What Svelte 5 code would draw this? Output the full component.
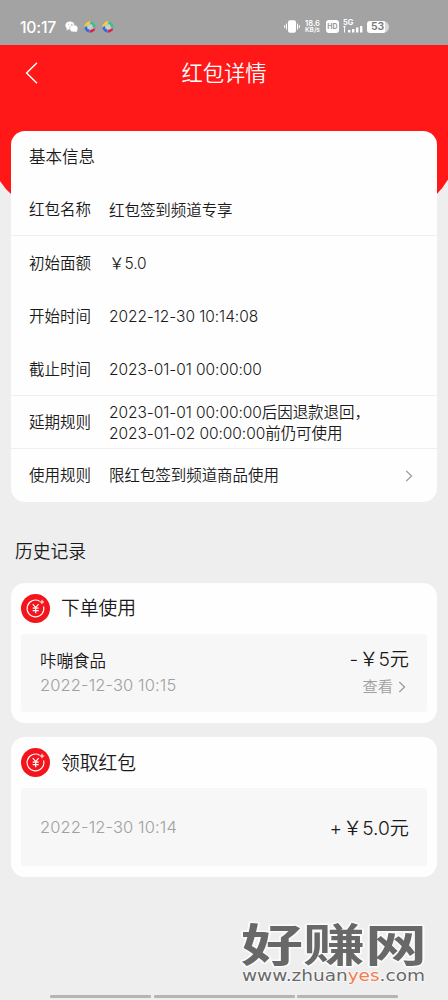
<script lang="ts">
  type InfoRow = { label: string; value: string[]; divider?: boolean; link?: boolean };

  const rows: InfoRow[] = [
    { label: "红包名称", value: ["红包签到频道专享"], divider: true },
    { label: "初始面额", value: ["￥5.0"] },
    { label: "开始时间", value: ["2022-12-30 10:14:08"] },
    { label: "截止时间", value: ["2023-01-01 00:00:00"], divider: true },
    {
      label: "延期规则",
      value: ["2023-01-01 00:00:00后因退款退回，", "2023-01-02 00:00:00前仍可使用"],
      divider: true,
    },
    { label: "使用规则", value: ["限红包签到频道商品使用"], link: true },
  ];

  const records = [
    { title: "下单使用", shop: "咔嘣食品", time: "2022-12-30 10:15", sign: "-", amount: "￥5元", detail: true },
    { title: "领取红包", shop: "", time: "2022-12-30 10:14", sign: "+", amount: "￥5.0元", detail: false },
  ];
</script>

{#snippet pinwheel()}
  <svg class="pinwheel" viewBox="0 0 12 12">
    <path d="M.4 6.4A5.6 5.6 0 0 1 6.6 .4L5.6 3.2L3.4 4.2Z" fill="#f6cf2f" />
    <path d="M7 .5A5.6 5.6 0 0 1 11.5 7L8.8 5.8L7.8 3.4L5.9 3.2Z" fill="#35c48d" />
    <path d="M11.4 7.4A5.6 5.6 0 0 1 5 11.5L6.4 8.8L8.7 8Z" fill="#e0204e" />
    <path d="M4.6 11.4A5.6 5.6 0 0 1 .5 6.6L3.2 5L3.6 7.6L5.8 8.8Z" fill="#2f6de0" />
    <path d="M3.4 4.2L5.8 3.2L8 3.5L8.8 5.9L8.6 8L6.2 8.8L3.7 7.8L3.1 5.4Z" fill="#c9cfcc" />
  </svg>
{/snippet}

{#snippet chevron()}
  <svg class="chevron" viewBox="0 0 8 12" fill="none">
    <path d="M1.3 1L6.6 6L1.3 11" stroke="#999" stroke-width="1.2" />
  </svg>
{/snippet}

<div class="page">
  <div class="status-bar">
    <span class="clock">10:17</span>
    <svg class="wechat" viewBox="0 0 13 12">
      <ellipse cx="5" cy="4.4" rx="4.6" ry="4" fill="#fff" />
      <path d="M1.8 7L1.4 9.4L4 8Z" fill="#fff" />
      <ellipse cx="8.8" cy="7.4" rx="4.1" ry="3.5" fill="#fff" stroke="#a3a3a3" stroke-width=".5" />
      <path d="M9.5 10L11.8 11.3L11.4 9.2Z" fill="#fff" />
      <circle cx="3.5" cy="3.3" r=".5" fill="#a3a3a3" />
      <circle cx="6.5" cy="3.3" r=".5" fill="#a3a3a3" />
    </svg>
    {@render pinwheel()}
    {@render pinwheel()}

    <div class="status-right">
      <svg class="vibrate" viewBox="0 0 16 13">
        <rect x="4" y=".3" width="8" height="12.4" rx="2" fill="#fff" />
        <path d="M2.5 3.5V9.5M13.5 3.5V9.5M.7 5V8M15.3 5V8" stroke="#fff" stroke-width="1" />
      </svg>
      <div class="speed"><span>18.6</span><span>KB/s</span></div>
      <span class="hd">HD</span>
      <div class="signal">
        <span>5G</span>
        <svg viewBox="0 0 20 7" fill="#fff">
          <path d="M0 0H3L1.5 2.5ZM1 2H2V6.5H1Z" />
          <rect x="5" y="4" width="2.4" height="2.5" />
          <rect x="9" y="3" width="2.4" height="3.5" />
          <rect x="13" y="1.5" width="2.4" height="5" />
          <rect x="17" y="0" width="2.4" height="6.5" />
        </svg>
      </div>
      <div class="battery"><span>53</span></div>
    </div>
  </div>

  <header class="hero">
    <div class="nav">
      <svg class="back" viewBox="0 0 13 22" fill="none">
        <path d="M12 .8L1.6 11L12 21.2" stroke="#fff" stroke-width="1.5" />
      </svg>
      <h1>红包详情</h1>
    </div>
  </header>

  <section class="card info">
    <h2>基本信息</h2>
    {#each rows as row}
      <div class="row" class:divider={row.divider}>
        <span class="label">{row.label}</span>
        <div class="value">
          {#each row.value as line}
            <span>{line}</span>
          {/each}
        </div>
        {#if row.link}{@render chevron()}{/if}
      </div>
    {/each}
  </section>

  <h3>历史记录</h3>

  {#each records as record}
    <section class="card record">
      <div class="record-head">
        <svg class="coin" viewBox="0 0 29 29" fill="none">
          <circle cx="14.5" cy="14.5" r="14.5" fill="#f4141c" />
          <path d="M18.6 7.2A8.4 8.4 0 1 0 22.6 12.4" stroke="#fff" stroke-width="1.1" />
          <path d="M21 5.8V10.2M18.8 8H23.2" stroke="#fff" stroke-width="1" />
          <path d="M11.8 10.2L14.7 13.6L17.6 10.2M14.7 13.6V19.2M11.7 14.2H17.7M11.7 16.6H17.7" stroke="#fff" stroke-width="1.2" />
        </svg>
        <span>{record.title}</span>
      </div>
      <div class="panel">
        <div class="left">
          {#if record.shop}<span class="shop">{record.shop}</span>{/if}
          <span class="time">{record.time}</span>
        </div>
        <div class="right">
          <span class="amount"><i>{record.sign}</i>{record.amount}</span>
          {#if record.detail}
            <span class="detail">查看{@render chevron()}</span>
          {/if}
        </div>
      </div>
    </section>
  {/each}

  <svg class="watermark" viewBox="0 0 192 70">
    <text class="brand" x="3" y="45" textLength="186" lengthAdjust="spacingAndGlyphs">好赚网</text>
    <text class="site" x="4" y="64" textLength="183" lengthAdjust="spacingAndGlyphs">www.zhuan<tspan fill="#f47a50">yes</tspan>.com</text>
  </svg>

  <div class="home-bar"><i></i><i></i><i></i></div>
</div>

<style>
  :global(body) {
    background: #eee;
  }

  .page {
    position: relative;
    box-sizing: border-box;
    width: 448px;
    height: 1000px;
    overflow: hidden;
    background: #eee;
    color: #1a1a1a;
    font-family: Inter, "Noto Sans CJK SC", sans-serif;
    font-weight: 350;
  }

  svg {
    display: block;
    flex: none;
  }

  h1, h2, h3 {
    margin: 0;
    font-weight: inherit;
  }

  .status-bar {
    box-sizing: border-box;
    height: 45px;
    padding: 8px 59px 0 20px;
    display: flex;
    align-items: center;
    background: #a3a3a3;
    color: #fff;
  }

  .clock {
    width: 45px;
    padding-top: 1px;
    font-size: 15.8px;
    font-weight: 500;
    letter-spacing: -0.2px;
  }

  .wechat {
    width: 13px;
    height: 12px;
  }

  .pinwheel {
    width: 12px;
    height: 12px;
    margin-left: 6px;
  }

  .status-right {
    display: flex;
    align-items: center;
    margin-left: auto;
  }

  .vibrate {
    width: 16px;
    height: 13px;
    margin-right: 4px;
  }

  .speed {
    display: flex;
    flex-direction: column;
    align-items: center;
    width: 17px;
    margin-right: 5px;
    font-size: 7.5px;
    font-weight: 600;
    line-height: 7px;
  }

  .speed span:last-child {
    font-size: 6.5px;
    line-height: 6px;
  }

  .hd {
    width: 13px;
    margin-right: 4px;
    border-radius: 3px;
    background: #fff;
    color: #999;
    font-size: 7px;
    font-weight: 700;
    line-height: 13px;
    text-align: center;
  }

  .signal {
    width: 20px;
    margin-right: 4px;
    font-size: 7.5px;
    font-weight: 700;
    line-height: 6px;
  }

  .signal span {
    display: block;
  }

  .signal svg {
    width: 20px;
    height: 7px;
  }

  .battery {
    display: flex;
    align-items: center;
    width: 22px;
    border-radius: 3px 6px 6px 3px;
    background: linear-gradient(90deg, #fff 80%, #d8d8d8 80%);
    color: #777;
    font-size: 10.5px;
    font-weight: 600;
    line-height: 12px;
  }

  .battery span {
    padding-left: 4px;
  }

  .hero {
    height: 150px;
    background: #ff1817;
    clip-path: path("M0 0H448V134.5Q443 143 436 150H12Q5 144 0 136Z");
  }

  .nav {
    display: flex;
    align-items: center;
    height: 56px;
    padding: 0 25px;
    color: #fff;
  }

  .back {
    width: 13px;
    height: 22px;
  }

  h1 {
    flex: 1;
    padding-right: 13px;
    font-size: 21.3px;
    line-height: 30px;
    text-align: center;
  }

  .card {
    position: relative;
    margin: 0 11px;
    border-radius: 14px;
    background: #fefefe;
  }

  .info {
    height: 371px;
    margin-top: -64px;
  }

  h2 {
    padding-left: 18px;
    font-size: 16.5px;
    line-height: 52px;
  }

  .row {
    box-sizing: border-box;
    display: flex;
    align-items: center;
    height: 53.2px;
    padding: 0 24px 0 18px;
    font-size: 15.5px;
    line-height: 21.5px;
  }

  .divider {
    border-bottom: 1.5px solid #efefef;
  }

  .label {
    width: 80px;
    padding-top: 2px;
  }

  .value {
    display: flex;
    flex: 1;
    flex-direction: column;
    padding-top: 2.5px;
    letter-spacing: -0.06px;
    white-space: nowrap;
  }

  .row:last-child .label,
  .row:last-child .value {
    padding-top: 1px;
  }

  .chevron {
    width: 8px;
    height: 12px;
  }

  h3 {
    padding-left: 15px;
    margin: 36px 0 17px;
    font-size: 17.8px;
    line-height: 28px;
  }

  .record {
    box-sizing: border-box;
    height: 140px;
    margin-bottom: 14.4px;
    padding: 0 10px;
  }

  .record-head {
    display: flex;
    align-items: center;
    gap: 11px;
    height: 51px;
    font-size: 18.8px;
  }

  .record-head span {
    padding-top: 1.5px;
    line-height: 26px;
  }

  .coin {
    width: 29px;
    height: 29px;
  }

  .panel {
    box-sizing: border-box;
    display: flex;
    align-items: center;
    justify-content: space-between;
    height: 77.5px;
    padding: 0 18px 0 19px;
    border-radius: 3px;
    background: #f7f7f7;
  }

  .left,
  .right {
    display: flex;
    flex-direction: column;
    line-height: 25px;
  }

  .right {
    align-items: flex-end;
    line-height: 28px;
  }

  .shop {
    padding-top: 2px;
    line-height: 24px;
    font-size: 16.5px;
  }

  .time {
    color: #a0a0a0;
    font-size: 16.5px;
    letter-spacing: 0.12px;
  }

  .amount {
    padding-top: 1px;
    font-size: 19.2px;
  }

  .amount i {
    margin-right: 1px;
    font-style: normal;
  }

  .detail {
    display: flex;
    align-items: center;
    gap: 5px;
    padding-right: 3px;
    color: #a0a0a0;
    font-size: 15.3px;
  }

  .watermark {
    position: absolute;
    left: 238px;
    top: 917px;
    width: 192px;
    height: 70px;
    overflow: visible;
  }

  .watermark text {
    paint-order: stroke;
    stroke: #fafafa;
    stroke-width: 3px;
    stroke-linejoin: round;
    fill: #686868;
  }

  .watermark .brand {
    font-family: "Noto Sans CJK SC", sans-serif;
    font-size: 45px;
    font-weight: 700;
  }

  .watermark .site {
    font-family: "DejaVu Sans", sans-serif;
    font-size: 15px;
    font-weight: 400;
    stroke-width: 1.5px;
  }

  .home-bar {
    position: absolute;
    left: 50px;
    top: 995px;
    display: grid;
    grid-template-columns: 101px 141px 101px;
    gap: 2.5px;
  }

  .home-bar i {
    height: 3px;
    border-radius: 1px;
    background: #b5b5b5;
  }
</style>
